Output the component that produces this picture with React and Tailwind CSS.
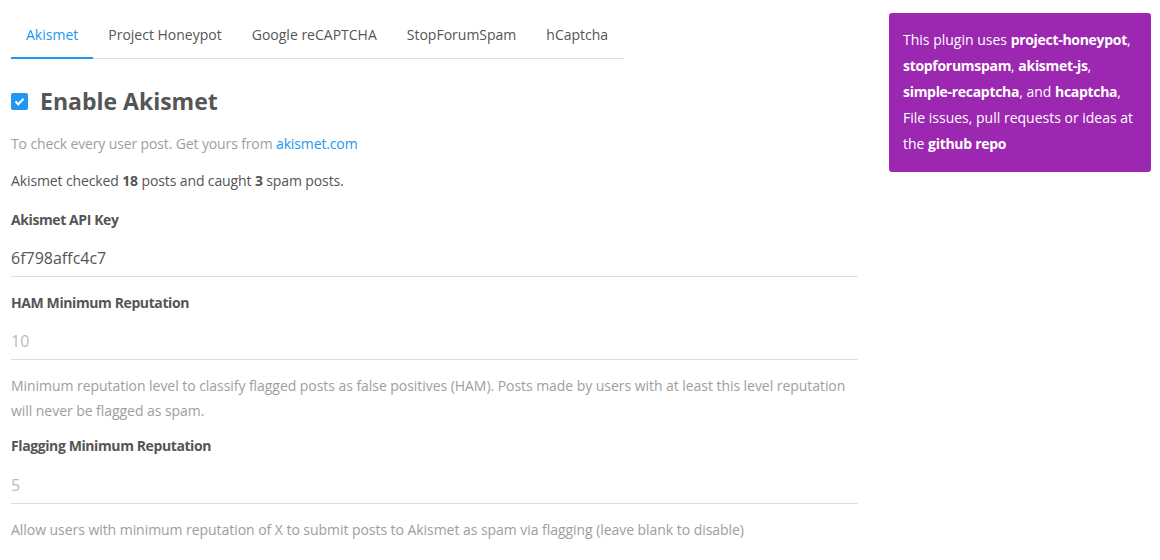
const TABS = ['Akismet', 'Project Honeypot', 'Google reCAPTCHA', 'StopForumSpam', 'hCaptcha'];

function Field({ label, value, muted, help, top, valueTop = 'mt-[17px]' }) {
  return (
    <div>
      <div className={`${top} text-[14px] font-bold tracking-[-0.4px] leading-[20px] text-[#555]`}>
        {label}
      </div>
      <div
        className={[
          valueTop,
          'border-b border-[#ddd] pb-[7px] text-[16px] leading-[22px]',
          muted ? 'text-[#bbb]' : 'text-[#555]',
        ].join(' ')}
      >
        {value}
      </div>
      {help && (
        <p className="mt-[13px] text-[14px] tracking-[-0.05px] leading-[25px] text-[#9e9e9e]">{help}</p>
      )}
    </div>
  );
}

export default function App() {
  return (
    <div
      className="flex items-start gap-[31px] bg-white pl-[11px] w-[1160px] h-[560px] overflow-hidden"
      style={{ fontFamily: '"Open Sans", "Noto Sans", sans-serif' }}
    >
      <div className="w-[847px] shrink-0">
        {/* Tabs */}
        <div className="flex w-[613px] mt-[14px] border-b border-[#ddd]">
          {TABS.map((t, i) => (
            <div
              key={t}
              className={[
                'px-[15px] pb-[11px] pt-[10px] text-[14px] leading-[22px] -mb-px border-b-2',
                i === 0 ? 'border-[#2196f3] text-[#2196f3]' : 'border-transparent text-[#555]',
              ].join(' ')}
            >
              {t}
            </div>
          ))}
        </div>

        {/* Enable toggle */}
        <div className="mt-[26px] flex items-center gap-[12px]">
          <span className="flex h-[17px] w-[17px] items-center justify-center rounded-[2px] bg-[#2196f3]">
            <svg width="11" height="9" viewBox="0 0 11 9" fill="none">
              <path d="M1.5 4.5l2.8 2.8L9.5 1.8" stroke="white" strokeWidth="2" />
            </svg>
          </span>
          <h2 className="text-[23px] font-bold leading-[32px] text-[#555]">Enable Akismet</h2>
        </div>

        <p className="mt-[17px] text-[14px] tracking-[-0.13px] leading-[20px] text-[#9e9e9e]">
          To check every user post. Get yours from <a className="text-[#2196f3]">akismet.com</a>
        </p>
        <p className="mt-[17px] text-[14px] tracking-[-0.12px] leading-[20px] text-[#555]">
          Akismet checked <b>18</b> posts and caught <b>3</b> spam posts.
        </p>

        <Field top="mt-[19px]" label="Akismet API Key" value="6f798affc4c7" />
        <Field
          top="mt-[16px]"
          label="HAM Minimum Reputation"
          value="10"
          muted
          help="Minimum reputation level to classify flagged posts as false positives (HAM). Posts made by users with at least this level reputation will never be flagged as spam."
        />
        <Field
          top="mt-[13px]"
          valueTop="mt-[18px]"
          label="Flagging Minimum Reputation"
          value="5"
          muted
          help="Allow users with minimum reputation of X to submit posts to Akismet as spam via flagging (leave blank to disable)"
        />
      </div>

      <aside className="mt-[13px] w-[262px] shrink-0 rounded-[3px] bg-[#9c27b0] px-[14px] pt-[14px] pb-[15px] text-[14px] leading-[26px] text-white [&_b]:tracking-[-0.3px]">
        This plugin uses <b>project-honeypot</b>, <b>stopforumspam</b>, <b>akismet-js</b>,{' '}
        <b>simple-recaptcha</b>, and <b>hcaptcha</b>, File issues, pull requests or ideas at the{' '}
        <b>github repo</b>
      </aside>
    </div>
  );
}
